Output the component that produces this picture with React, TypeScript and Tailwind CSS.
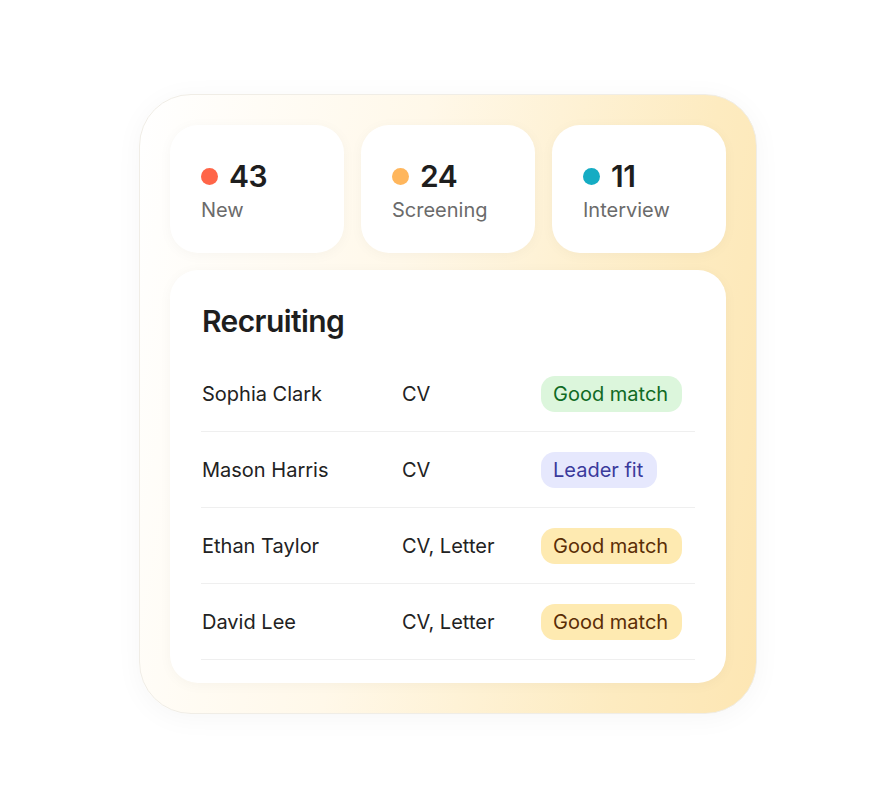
import React from "react";

const stats = [
  { n: "43", label: "New", dot: "bg-[#ff6548]" },
  { n: "24", label: "Screening", dot: "bg-[#ffb65c]" },
  { n: "11", label: "Interview", dot: "bg-[#15acc3]" },
];

const rows = [
  { name: "Sophia Clark", docs: "CV", badge: "Good match", cls: "bg-[#dcf6dc] text-[#106a24]" },
  { name: "Mason Harris", docs: "CV", badge: "Leader fit", cls: "bg-[#e6e8fd] text-[#3a3a9c]" },
  { name: "Ethan Taylor", docs: "CV, Letter", badge: "Good match", cls: "bg-[#feeab1] text-[#5a2d06]" },
  { name: "David Lee", docs: "CV, Letter", badge: "Good match", cls: "bg-[#feeab1] text-[#5a2d06]" },
];

export default function App() {
  return (
    <div
      className="w-full h-screen bg-white flex items-center justify-center"
      style={{ fontFamily: "Inter, 'Noto Sans', sans-serif" }}
    >
      <div className="w-[618px] h-[620px] rounded-[52px] border border-[#f0ede6] shadow-[0_4px_28px_rgba(0,0,0,0.04)] bg-[linear-gradient(100deg,#ffffff_0%,#fff8e9_40%,#fdebc0_80%,#fde6b3_100%)] p-[30px] flex flex-col gap-[17px]">
        <div className="flex gap-[17px] h-[128px]">
          {stats.map((s) => (
            <div
              key={s.label}
              className="flex-1 bg-white rounded-[28px] shadow-[0_2px_14px_rgba(0,0,0,0.035)] pl-[31px] pt-[34px]"
            >
              <div className="flex items-center gap-[11px] h-[34px]">
                <span className={`w-[17px] h-[17px] rounded-full ${s.dot}`} />
                <span className="text-[30px] font-semibold text-[#1e1e1e] leading-none tracking-[-0.5px]">
                  {s.n}
                </span>
              </div>
              <div className="text-[20px] text-[#6b6b6b] mt-[5px] leading-[24px]">{s.label}</div>
            </div>
          ))}
        </div>
        <div className="flex-1 bg-white rounded-[28px] shadow-[0_2px_14px_rgba(0,0,0,0.035)] pl-[31px] pr-[31px] pt-[33px]">
          <div className="text-[30px] font-semibold text-[#1e1e1e] leading-[36px] tracking-[-0.6px] ml-[1px]">
            Recruiting
          </div>
          <div className="mt-[17px]">
            {rows.map((r) => (
              <div
                key={r.name}
                className="grid grid-cols-[201px_139px_1fr] items-center h-[76px] border-b border-[#efefef] text-[20px] text-[#222]"
              >
                <div className="pl-[1px]">{r.name}</div>
                <div>{r.docs}</div>
                <div>
                  <span className={`inline-flex items-center h-[36px] pl-[12px] pr-[14px] rounded-[14px] ${r.cls}`}>
                    {r.badge}
                  </span>
                </div>
              </div>
            ))}
          </div>
        </div>
      </div>
    </div>
  );
}
